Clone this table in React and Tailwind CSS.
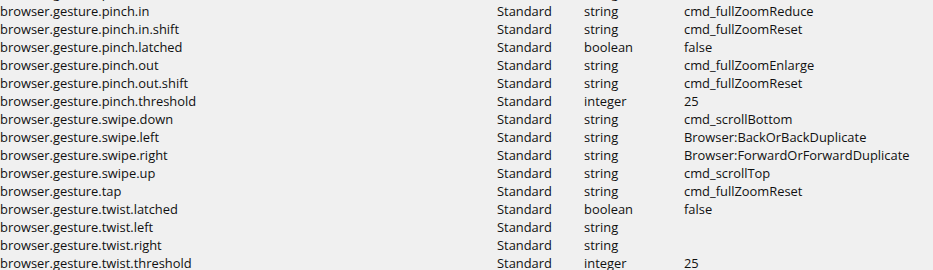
const rows = [
  ['browser.gesture.pinch.in.latched', 'string', ''],
  ['browser.gesture.pinch.in', 'string', 'cmd_fullZoomReduce'],
  ['browser.gesture.pinch.in.shift', 'string', 'cmd_fullZoomReset'],
  ['browser.gesture.pinch.latched', 'boolean', 'false'],
  ['browser.gesture.pinch.out', 'string', 'cmd_fullZoomEnlarge'],
  ['browser.gesture.pinch.out.shift', 'string', 'cmd_fullZoomReset'],
  ['browser.gesture.pinch.threshold', 'integer', '25'],
  ['browser.gesture.swipe.down', 'string', 'cmd_scrollBottom'],
  ['browser.gesture.swipe.left', 'string', 'Browser:BackOrBackDuplicate'],
  ['browser.gesture.swipe.right', 'string', 'Browser:ForwardOrForwardDuplicate'],
  ['browser.gesture.swipe.up', 'string', 'cmd_scrollTop'],
  ['browser.gesture.tap', 'string', 'cmd_fullZoomReset'],
  ['browser.gesture.twist.latched', 'boolean', 'false'],
  ['browser.gesture.twist.left', 'string', ''],
  ['browser.gesture.twist.right', 'string', ''],
  ['browser.gesture.twist.threshold', 'integer', '25'],
]

export default function App() {
  return (
    <div className="w-[933px] h-[270px] overflow-hidden bg-[#f0f0f0] text-[#111111] text-[12.9px] font-['Open_Sans',sans-serif]">
      <div className="-mt-[15px]">
        {rows.map(([name, type, value]) => (
          <div key={name} className="flex h-[18px] items-center whitespace-nowrap">
            <div className="w-[497px]">{name}</div>
            <div className="w-[87px]">Standard</div>
            <div className="w-[100px]">{type}</div>
            <div>{value}</div>
          </div>
        ))}
      </div>
    </div>
  )
}
